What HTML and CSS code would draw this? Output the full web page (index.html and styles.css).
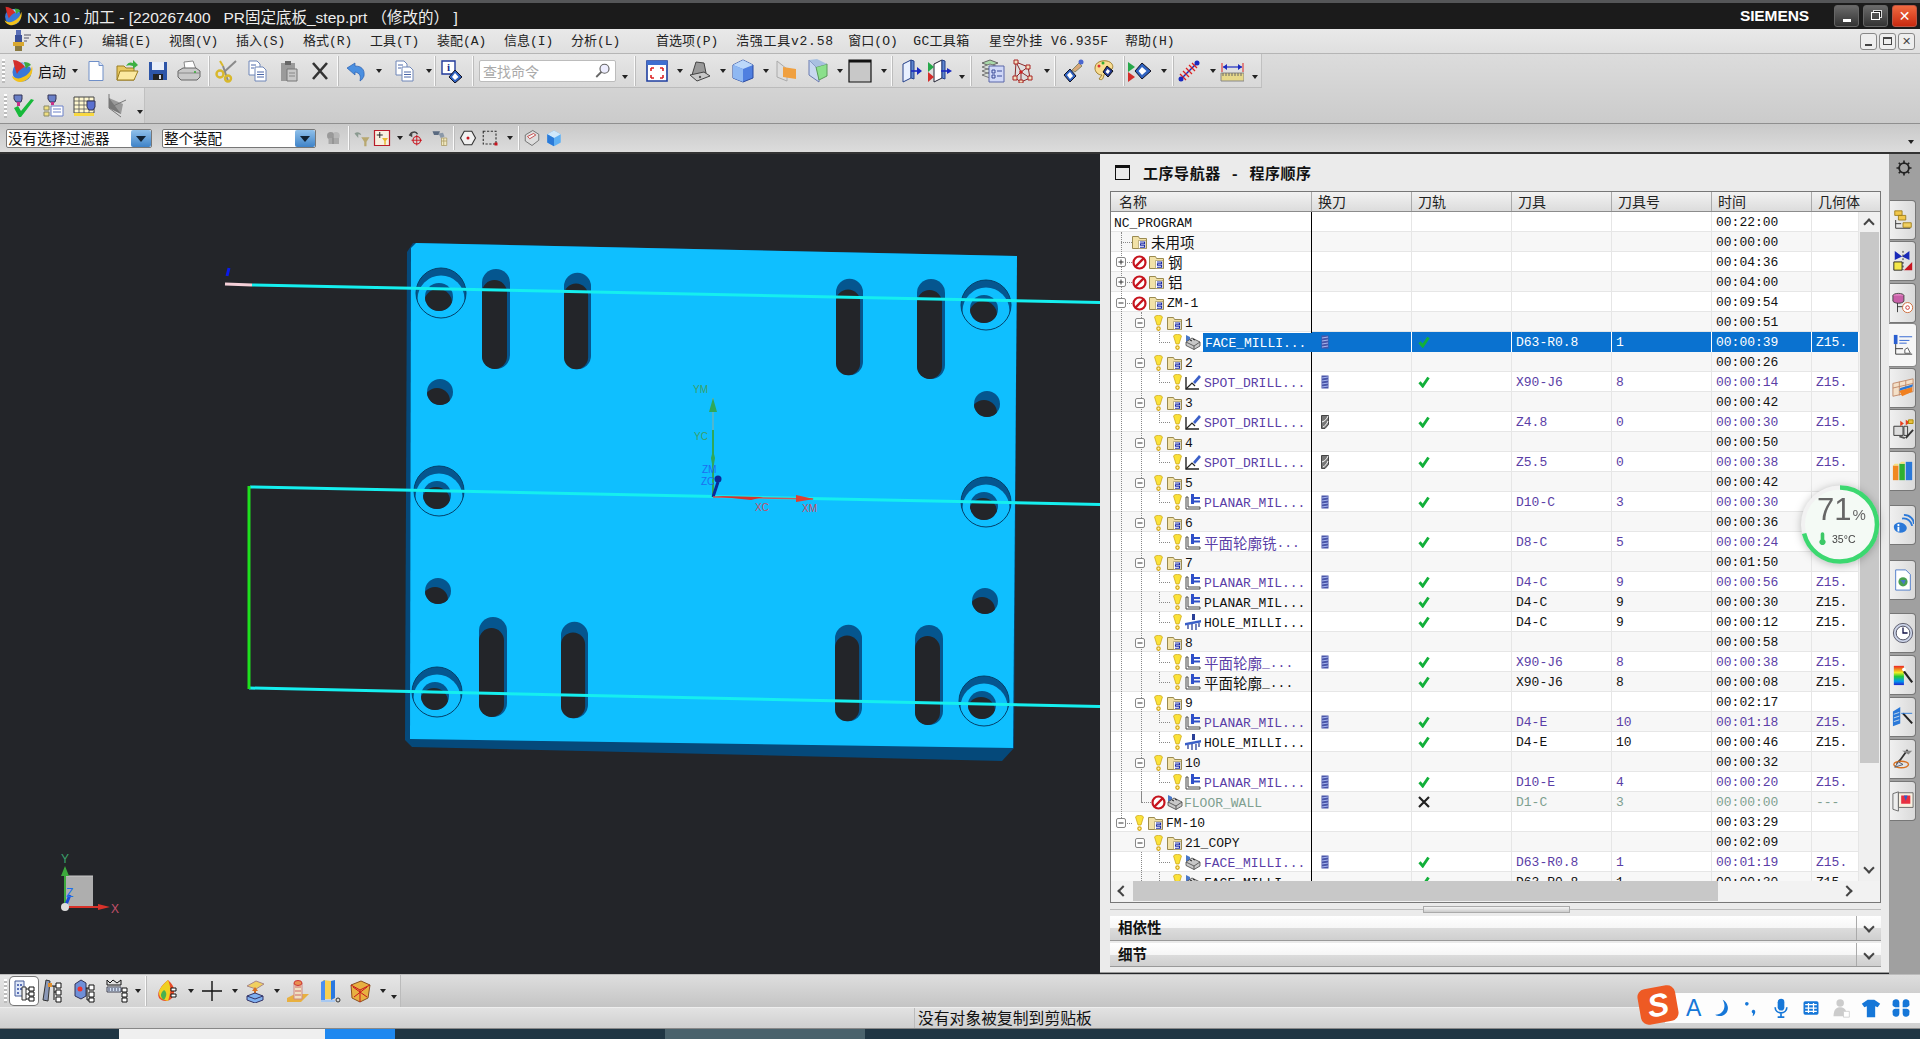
FILE: index.html
```html
<!DOCTYPE html>
<html lang="zh">
<head>
<meta charset="utf-8">
<title>NX 10 - 加工</title>
<link rel="stylesheet" href="styles.css">
</head>
<body>
<svg class="defs" aria-hidden="true">
<defs>
<clipPath id="c13"><circle r="13"/></clipPath>
<clipPath id="c14"><circle cx="-2" cy="4" r="14"/></clipPath>
<symbol id="nx" viewBox="0 0 24 24"><circle cx="12" cy="13" r="9.5" fill="#3a78d8"/><path d="M8 6c5-3 11-2 12 2-3-1-8 0-12 3z" fill="#9fd0f5"/><path d="M3 1c5 0 9 3 12 7-3 1-6 3-8 7C5 10 4 6 3 1z" fill="#d42d2a"/><path d="M22 7c2 7-3 15-11 16-4 0-8-2-9-6 4 3 8 3 11 1 5-2 8-6 9-11z" fill="#f3c21b"/><path d="M14 3c3 0 6 1 7 3-2 1-4 2-5 4z" fill="#3ea83e"/></symbol>
<symbol id="mlg" viewBox="0 0 24 24"><path d="M8 1h5v5H8z" fill="#5a6fb8"/><path d="M7 6h7v7H7z" fill="#3a4f98"/><path d="M5 13h11v4H5z" fill="#d8a830"/><path d="M7 17h7v5H7z" fill="#8a7a40"/><path d="M16 6h7M16 9h5M16 12h3" stroke="#556"/></symbol>
<symbol id="new" viewBox="0 0 24 24"><path d="M5 2.500h10l4 4v15H5z" fill="#fff" stroke="#6f8fc8"/><path d="M15 2.500v4h4" fill="#d8e4f8" stroke="#6f8fc8"/></symbol>
<symbol id="open" viewBox="0 0 24 24"><path d="M2 21V7h7l2 2h8v12z" fill="#e8c860" stroke="#9a7d20"/><path d="M2 21l3-9h18l-4 9z" fill="#fbe9a0" stroke="#9a7d20"/><path d="M11 7c2-4 5-4 7-3V1l5 5-5 4V7c-3-1-5-1-7 0z" fill="#3cb043"/></symbol>
<symbol id="save" viewBox="0 0 24 24"><path d="M3 3h18v18H3z" fill="#2d55a8"/><path d="M6 3h12v8H6z" fill="#e8eef8"/><path d="M7 15h10v6H7z" fill="#222"/><path d="M13 16h2v4h-2z" fill="#d0d8e8"/></symbol>
<symbol id="print" viewBox="0 0 24 24"><path d="M7 3l9-1 3 8H8z" fill="#fff" stroke="#888"/><path d="M1 12l5-3h13l4 3v6l-3 3H4l-3-3z" fill="#c8c8c8" stroke="#666"/><path d="M1 14h22" stroke="#888"/><circle cx="18" cy="13" r="1" fill="#3a3"/></symbol>
<symbol id="cut" viewBox="0 0 24 24"><path d="M22 2L9 14M14 22L9 7" stroke="#8a8a8a" stroke-width="2" fill="none"/><circle cx="6" cy="15" r="3.5" fill="none" stroke="#d8b82c" stroke-width="2.4"/><circle cx="14" cy="19.5" r="3" fill="none" stroke="#d8b82c" stroke-width="2.4"/><path d="M9 7l-3-5" stroke="#d8b82c" stroke-width="2"/></symbol>
<symbol id="copy" viewBox="0 0 24 24"><path d="M4 2h8l3 3v11H4z" fill="#fff" stroke="#6f86b8"/><path d="M10 8h8l3 3v11H10z" fill="#fff" stroke="#6f86b8"/><path d="M12 13h7M12 15.500h7M12 18h7M6 6h5M6 9h3" stroke="#4a66a8"/></symbol>
<symbol id="paste" viewBox="0 0 24 24"><path d="M4 4h14v18H4z" fill="#9a9a9a"/><path d="M8 2h6v4H8z" fill="#666"/><path d="M10 10h10v12H10z" fill="#c8c8c8" stroke="#777"/><path d="M12 14h6M12 17h6" stroke="#888"/></symbol>
<symbol id="del" viewBox="0 0 24 24"><path d="M5 4l14 16M19 4L5 20" stroke="#333" stroke-width="2.6"/></symbol>
<symbol id="undo" viewBox="0 0 24 24"><path d="M3 9l8-5v3c6 0 10 3 9 10-1 2-2 4-4 5 1-5 0-8-5-9v3z" fill="#4a8fe0" stroke="#2a5fb0" stroke-width=".7"/></symbol>
<symbol id="info" viewBox="0 0 24 24"><path d="M3 2h13v13H3z" fill="#fff" stroke="#223a9a" stroke-width="1.4"/><text x="9.500" y="12" font-size="11" font-weight="700" text-anchor="middle" fill="#112a8a" font-family="Liberation Serif">i</text><path d="M16 11l7 7-7 6-6-6z" fill="#2f62c0" stroke="#112"/><path d="M16 14l3.500 4-3.500 3-3-3z" fill="#fff"/></symbol>
<symbol id="mag" viewBox="0 0 24 24"><circle cx="14" cy="9" r="6" fill="#eef" stroke="#666" stroke-width="1.6"/><path d="M10 13l-7 7" stroke="#666" stroke-width="2.4"/></symbol>
<symbol id="fit" viewBox="0 0 24 24"><path d="M2 2h20v20H2z" fill="#fff" stroke="#1f3fa0" stroke-width="1.6"/><path d="M2 2h20v4H2z" fill="#3f6fd0"/><path d="M6 9h3M6 9v3M18 9h-3M18 9v3M6 19h3M6 19v-3M18 19h-3M18 19v-3" stroke="#d22" stroke-width="1.6"/></symbol>
<symbol id="mouse" viewBox="0 0 24 24"><path d="M8 3l8 1 2 10-14 2z" fill="#999" stroke="#444"/><path d="M2 16l14-3 6 4-13 5z" fill="#c8c8c8" stroke="#444"/><circle cx="12" cy="18" r="1.200" fill="#555"/></symbol>
<symbol id="cube" viewBox="0 0 24 24"><path d="M12 1l10 5v13l-10 4-10-4V6z" fill="#4f7fe0" stroke="#2a4aa0"/><path d="M12 1l10 5-10 4L2 6z" fill="#bcd8fa"/><path d="M2 6l10 4v13L2 19z" fill="#8fb8f2"/></symbol>
<symbol id="shade" viewBox="0 0 24 24"><path d="M3 2l10 8v12L3 18z" fill="#ddd" stroke="#aaa"/><path d="M9 8l13 2v10l-13-2z" fill="#f0a040"/></symbol>
<symbol id="glass" viewBox="0 0 24 24"><path d="M3 1l10 10v12L3 16z" fill="#c8d8f0" stroke="#6a7ab0"/><path d="M10 8l11-3v12l-8 4z" fill="#8be08b" stroke="#5a9a5a"/><path d="M3 1l8-1 10 5-11 3z" fill="#a8c0e0"/></symbol>
<symbol id="square" viewBox="0 0 24 24"><path d="M1 1h22v22H1z" fill="#c8c8c8" stroke="#111" stroke-width="1.200"/><path d="M1 1h22v2.500H1z" fill="#111"/></symbol>
<symbol id="oper" viewBox="0 0 24 24"><path d="M4 5l8-4v18l-8 4z" fill="#e8f0ff" stroke="#24408a"/><path d="M12 1l3 1v18l-3-1z" fill="#5f86d0" stroke="#24408a"/><path d="M12 12h9" stroke="#1a2ac0" stroke-width="1.600"/><path d="M18 8l5 4-5 4z" fill="#1a2ac0"/></symbol>
<symbol id="oper2" viewBox="0 0 24 24"><path d="M6 5l8-4v18l-8 4z" fill="#fff" stroke="#223"/><path d="M14 1l3 1v18l-3-1z" fill="#5f86d0" stroke="#24408a"/><path d="M0 3l6 5-6 5z" fill="#27a84a"/><path d="M0 13l6 5-6 5z" fill="#d42d2a"/><path d="M13 12h8" stroke="#1a2ac0" stroke-width="1.600"/><path d="M19 9l5 3-5 3z" fill="#1a2ac0"/></symbol>
<symbol id="stack" viewBox="0 0 24 24"><path d="M1 4l8-3 8 3-8 3z" fill="#a8d8a8" stroke="#666"/><path d="M1 8l8-3 8 3-8 3zM1 12l8-3 8 3-8 3zM1 16l8-3 8 3-8 3z" fill="#d8dfd8" stroke="#777"/><path d="M8 7h15v16H8z" fill="#d0d8f8" stroke="#5a66a8"/><path d="M11 11h3v3h-3zM11 16h3v3h-3zM16 12h5M16 17h5" stroke="#3a4a98" fill="none"/></symbol>
<symbol id="mesh" viewBox="0 0 24 24"><path d="M5 3l12 5 2 11-9 4-6-4zM5 3l5 10 9 6M10 13l-6 6M10 13l7-5M10 13v10" fill="none" stroke="#8a2a2a"/><path d="M3 1h4v4H3zM15 6h4v4h-4zM17 17h4v4h-4zM8 21h4v3H8zM2 17h4v4H2z" fill="#f0e0c0" stroke="#a22"/><circle cx="10" cy="13" r="1.800" fill="#c22"/></symbol>
<symbol id="brush" viewBox="0 0 24 24"><path d="M3 16l6-6 6 7-6 6z" fill="#2f62c0" stroke="#112"/><path d="M6 16l3-3 3 4-3 3z" fill="#fff"/><path d="M11 11l7-7 3 3-7 6z" fill="#d8a878" stroke="#886"/><circle cx="20" cy="3" r="2.500" fill="#4a66d0"/></symbol>
<symbol id="palette" viewBox="0 0 24 24"><path d="M3 9c0-6 7-8 12-7s7 5 5 8c-3 3-7 2-8 6-1 3-1 6-5 4l3-4c-4 0-7-3-7-7z" fill="#f8dc90" stroke="#a08030"/><circle cx="7" cy="7" r="1.500" fill="#d33"/><circle cx="11" cy="4" r="1.500" fill="#3a3"/><path d="M15 7l6 5-5 6-5-5z" fill="#233a90" stroke="#111"/><path d="M15.500 10l2.500 2-2 3-2.500-2z" fill="#fff"/></symbol>
<symbol id="plot" viewBox="0 0 24 24"><path d="M0 3l7 5-7 5z" fill="#27a84a"/><path d="M0 13l7 5-7 5z" fill="#d42d2a"/><path d="M14 4l9 8-9 8-7-8z" fill="#2f62c0" stroke="#112"/><path d="M14 8l4.500 4-4.500 4-3.500-4z" fill="#fff"/></symbol>
<symbol id="cross" viewBox="0 0 24 24"><path d="M3 21L21 3" stroke="#1a2ac0" stroke-width="1.400"/><path d="M3 15l6 6M6 12l6 6M9 9l6 6M12 6l6 6M15 4l5 5" stroke="#d22" stroke-width="1.300"/><circle cx="4" cy="20" r="2.500" fill="#1a2ac0"/><circle cx="20" cy="4" r="2.500" fill="#1a2ac0"/></symbol>
<symbol id="ruler" viewBox="0 0 24 24"><path d="M1 14h23v8H1z" fill="#e6d88a" stroke="#888"/><path d="M3 14v3M6 14v3M9 14v3M12 14v3M15 14v3M18 14v3M21 14v3" stroke="#666"/><path d="M2 4v9M23 4v9" stroke="#d22"/><path d="M3 8h19" stroke="#1a2ac0" stroke-width="1.200"/><path d="M3 8l4-3v6zM22 8l-4-3v6z" fill="#1a2ac0"/></symbol>
<symbol id="vcheck" viewBox="0 0 24 24"><path d="M3 1h8v4l-1 3H5L3 5z" fill="#6a80c8" stroke="#335"/><path d="M6 8h3v4H6z" fill="#c8308a"/><path d="M3 14l5 9h2L23 6l-3-1-10 12-3-5z" fill="#17b93a"/></symbol>
<symbol id="vtree" viewBox="0 0 24 24"><path d="M7 1h8v4l-1 3H9L7 5z" fill="#6a80c8" stroke="#335"/><path d="M10 8h3v3h-3z" fill="#c8308a"/><path d="M3 12h5v4H3zM3 18h5v4H3z" fill="#f0df80" stroke="#886"/><path d="M10 12h12v10H10z" fill="#fff" stroke="#6a80c8"/><path d="M12 15h8M12 18h8" stroke="#6a80c8"/></symbol>
<symbol id="vgrid" viewBox="0 0 24 24"><path d="M1 3h20v16H1z" fill="#fff8d0" stroke="#444"/><path d="M1 7h20M1 11h20M1 15h20M6 3v16M11 3v16M16 3v16" stroke="#555" stroke-width=".8"/><path d="M1 19h20v3H1z" fill="#f8d840"/><path d="M14 7h8v6l-2 3h-4l-2-3z" fill="#5a70d0" stroke="#335"/></symbol>
<symbol id="vaxis" viewBox="0 0 24 24"><path d="M6 4l14 6-2 10-12-6z" fill="#999"/><path d="M6 14L6 0M6 14L23 6M6 14l12 9" stroke="#777"/><path d="M6 4v10l12 6" fill="#777"/></symbol>
<symbol id="filter" viewBox="0 0 24 24"><circle cx="9" cy="9" r="5" fill="#9a9a9a"/><circle cx="16" cy="9" r="5" fill="#b8b8b8"/><path d="M6 12h14v8H6z" fill="#a8a8a8"/><path d="M12 6v14" stroke="#777"/></symbol>
<symbol id="funnel1" viewBox="0 0 24 24"><path d="M2 6c3-3 8-2 9 2l-4-1 0 5z" fill="#8a9a90"/><path d="M11 11h11l-4 6v6h-3v-6z" fill="#b8a870"/></symbol>
<symbol id="funnel2" viewBox="0 0 24 24"><path d="M2 2h20v20H2z" fill="#f8f0e0" stroke="#b81c2a" stroke-width="1.600"/><path d="M9 4v8M5 8h8" stroke="#222" stroke-width="1.300"/><path d="M12 12h8l-3 4v5h-2v-5z" fill="#e8b830"/></symbol>
<symbol id="rot" viewBox="0 0 24 24"><path d="M4 9c0-5 8-7 10-2" fill="none" stroke="#444" stroke-width="2"/><path d="M2 8l5-2v5z" fill="#444"/><circle cx="13" cy="15" r="5" fill="none" stroke="#c8141e" stroke-width="1.500"/><path d="M13 8v14M6 15h14" stroke="#c8141e" stroke-width="1.200"/></symbol>
<symbol id="casc" viewBox="0 0 24 24"><path d="M2 3h10l-2 5H4z" fill="#5a6a80"/><path d="M10 6l6-1 2 5-5 2z" fill="#8a98a8"/><path d="M14 12h7v10h-7z" fill="#f0e8c0" stroke="#a89860"/><path d="M14 16h7M17 12v10" stroke="#a89860"/></symbol>
<symbol id="hex" viewBox="0 0 24 24"><path d="M7 3h10l5 9-5 9H7l-5-9z" fill="#f0f0f0" stroke="#333" stroke-width="1.500"/><circle cx="12" cy="12" r="2" fill="#c8141e"/></symbol>
<symbol id="dash" viewBox="0 0 24 24"><path d="M3 3h17v17H3z" fill="none" stroke="#333" stroke-width="1.500" stroke-dasharray="3 2"/><path d="M18 18h4v4h-4z" fill="#c8141e"/></symbol>
<symbol id="ecube" viewBox="0 0 24 24"><path d="M3 8l10-6 8 5v8l-9 7-9-6z" fill="#ddd" stroke="#555"/><path d="M6 10l8-4 3 2-8 5z" fill="#f4f4f4" stroke="#b22"/></symbol>
<symbol id="bcube" viewBox="0 0 24 24"><path d="M12 2l9 5v11l-9 5-9-5V7z" fill="#5eb0f4"/><path d="M12 2l9 5-9 5-9-5z" fill="#cfe8fb"/><path d="M3 7l9 5v11l-9-5z" fill="#2a7ad8"/></symbol>
<symbol id="b1" viewBox="0 0 24 24"><path d="M3 2h9v15H3z" fill="#dfe8f8" stroke="#445a98"/><path d="M5 5h2v2H5zM8 5h2v2H8zM5 9h2v2H5zM8 9h2v2H8zM5 13h2v2H5z" fill="#5a70b8"/><path d="M10 8h4v13h-4z" fill="#eee" stroke="#333"/><path d="M17 8h5v4h-5zM17 13h5v4h-5zM17 18h5v4h-5z" fill="#fff" stroke="#111"/><path d="M14 10h3M14 15h3M14 20h3" stroke="#111"/></symbol>
<symbol id="b2" viewBox="0 0 24 24"><path d="M5 1l4 1-2 20-5-1z" fill="#8a98b8" stroke="#333"/><path d="M7 4h4v4H7z" fill="#e09030"/><path d="M15 4h5v5h-5zM15 11h5v5h-5zM15 18h5v5h-5z" fill="#fff" stroke="#111"/><path d="M11 7h4M13 7v14M13 13h2" stroke="#111"/></symbol>
<symbol id="b3" viewBox="0 0 24 24"><path d="M2 5l6-4 5 3v13l-5 3-6-3z" fill="#6f8fd8" stroke="#335"/><circle cx="7" cy="10" r="2.500" fill="#e33"/><path d="M16 6h5v5h-5zM16 13h5v5h-5zM16 19h5v4h-5z" fill="#fff" stroke="#111"/><path d="M13 9h3M14 9v12h2" fill="none" stroke="#111"/></symbol>
<symbol id="b4" viewBox="0 0 24 24"><path d="M1 1l3 3 3-3 4 3 4-3v5H1z" fill="none" stroke="#111"/><path d="M1 8h14v5H1z" fill="#d0e0f0" stroke="#445"/><path d="M3 9v3M6 9v3M9 9v3M12 9v3" stroke="#446"/><path d="M16 9h5v4h-5zM16 14h5v4h-5zM16 19h5v4h-5z" fill="#fff" stroke="#111"/></symbol>
<symbol id="b5" viewBox="0 0 24 24"><path d="M12 1c6 5 8 11 4 18-3 4-10 4-13 0C0 13 6 6 12 1z" fill="#e84c2a"/><path d="M12 1c3 7 3 12 0 21-5-1-9-3-9-8 0-5 5-9 9-13z" fill="#f0d020"/><path d="M8 11c3 2 3 6 0 10-3-2-5-6 0-10z" fill="#48b050"/><path d="M15 9h5v3h-5zM15 15h5v3h-5z" fill="#fff" stroke="#111"/></symbol>
<symbol id="b6" viewBox="0 0 24 24"><path d="M12 2v20M2 12h20" stroke="#111" stroke-width="1.400"/></symbol>
<symbol id="b7" viewBox="0 0 24 24"><path d="M4 7l9-5 8 3-8 5z" fill="#f0d060" stroke="#a88"/><path d="M12 9v7" stroke="#d87020" stroke-width="2"/><path d="M9 12l3-4 3 4z" fill="#d87020"/><path d="M4 17l8-3 8 3v4l-8 3-8-3z" fill="#7fb0f0" stroke="#336"/><path d="M4 17l8 3 8-3" fill="none" stroke="#336"/></symbol>
<symbol id="b8" viewBox="0 0 24 24"><path d="M1 19l8-4h14l-8 8H1z" fill="#e8b040"/><path d="M8 4h8v16H8z" fill="#f0e0c0" stroke="#c88"/><ellipse cx="12" cy="4" rx="4" ry="2.500" fill="#e89050" stroke="#c33"/><path d="M9 8h6M9 12h6M9 16h6" stroke="#c66"/></symbol>
<symbol id="b9" viewBox="0 0 24 24"><path d="M6 1l8 1v18H6z" fill="#f8d050"/><path d="M14 2l4-1v18l-4 2z" fill="#2a78e0"/><path d="M4 3l4-2v20l-4 1z" fill="#4a8ff0"/><path d="M4 21h14v2H4z" fill="#a8c8f0"/><circle cx="21" cy="21" r="2" fill="none" stroke="#333"/></symbol>
<symbol id="b10" viewBox="0 0 24 24"><path d="M3 6l10-4 9 4-2 13-8 4-8-4z" fill="#e8b040" stroke="#8a5020"/><path d="M3 6l9 5 10-5M12 11v12M5 8l14 10M19 8L6 18" fill="none" stroke="#c8141e"/></symbol>
<symbol id="folder" viewBox="0 0 15 15"><path d="M.5 13.500V1.500h6l1 2h7v10z" fill="#f2e2a8" stroke="#9a8a50"/><path d="M6.500 5.500h7.500v8H6.500z" fill="#fff" stroke="#9a8a50" stroke-width=".6"/><path d="M8 7h4.500v1.800H8.500v1.400h4v2H8" fill="none" stroke="#1f2ea8" stroke-width="1.100"/></symbol>
<symbol id="bulb" viewBox="0 0 9 16"><path d="M.6 2.200C.6-.2 8.400-.2 8.400 2.200L6 10H3z" fill="#fbe23a" stroke="#c8a010" stroke-width=".7"/><circle cx="4.500" cy="13.600" r="1.700" fill="#fff4b0" stroke="#d8a810" stroke-width="1.200"/></symbol>
<symbol id="no" viewBox="0 0 15 15"><circle cx="7.500" cy="7.500" r="6" fill="#fff" stroke="#c6141e" stroke-width="2.200"/><path d="M3.400 11.600l8.200-8.200" stroke="#c6141e" stroke-width="2.200"/></symbol>
<symbol id="mn" viewBox="0 0 10 10"><rect x=".5" y=".5" width="9" height="9" rx="1.500" fill="#fff" stroke="#888"/><path d="M2.500 5h5" stroke="#333"/></symbol>
<symbol id="pl" viewBox="0 0 10 10"><rect x=".5" y=".5" width="9" height="9" rx="1.500" fill="#fff" stroke="#888"/><path d="M2.500 5h5M5 2.500v5" stroke="#333"/></symbol>
<symbol id="face" viewBox="0 0 16 16"><path d="M1 1l4 2v6L1 7z" fill="#4a78c8"/><path d="M1 8l6-4 8 4v4l-6 3.500-8-4z" fill="#c8c8c8" stroke="#444" stroke-width=".8"/><path d="M1 8l8 4 6-4M9 12v3.500" fill="none" stroke="#444" stroke-width=".8"/><path d="M5 6l2 1M8 5l2 1" stroke="#222"/></symbol>
<symbol id="spot" viewBox="0 0 16 16"><path d="M1 3v12h13" fill="none" stroke="#222" stroke-width="1.400"/><path d="M1 15l6-6 3 3" fill="none" stroke="#222" stroke-width="1.200"/><path d="M8 8l6-7 2 2-6 7z" fill="#3a5fc8"/></symbol>
<symbol id="planar" viewBox="0 0 16 16"><path d="M1 3v12h14v-2H3V3z" fill="#fff" stroke="#444" stroke-width="1"/><path d="M6 0h3v3h6v2H9v1.500h6v2H9V10H6z" fill="#3050c8"/></symbol>
<symbol id="hole" viewBox="0 0 16 16"><path d="M7 0h3v6H7z" fill="#2a3f98"/><path d="M0 9l16-3v2.500L0 11.500z" fill="#3a5fc8"/><path d="M3 11v4M7 10v6M11 10v6M14 9v4" stroke="#2a3f98" stroke-width="1.300"/></symbol>
<symbol id="tb" viewBox="0 0 8 14"><rect x=".5" y=".5" width="7" height="13" fill="#4a55a8"/><path d="M1 3l6-1M1 6l6-1M1 9l6-1M1 12l6-1" stroke="#a8b8f0"/></symbol>
<symbol id="tg" viewBox="0 0 8 14"><path d="M.5.500h7v9l-3.500 4h-3.500z" fill="#777" stroke="#444"/><path d="M1 7C4 6 6 4 7 1M2 12c2-1 4-3 5-6" stroke="#fff" fill="none"/></symbol>
<symbol id="ok" viewBox="0 0 12 12"><path d="M1.500 6.300L4.700 10 10.500 1.500" fill="none" stroke="#12b03a" stroke-width="2.900"/></symbol>
<symbol id="bad" viewBox="0 0 12 12"><path d="M1 1l10 10M11 1L1 11" stroke="#222" stroke-width="2.200"/></symbol>
<symbol id="t1" viewBox="0 0 24 24"><path d="M3 2h8v5H3zM7 7h8v5H7z" fill="#f2c84a" stroke="#a08020"/><path d="M4 12v9h16M4 16h6" stroke="#333" fill="none"/><path d="M12 15h9v5h-9z" fill="#f2d060" stroke="#a08020"/></symbol>
<symbol id="t2" viewBox="0 0 24 24"><path d="M3 1l8 6 8-6v10l-8-4-8 4z" fill="#1a2ab8"/><path d="M2 13h9v9H2z" fill="#f4e84a" stroke="#222"/><path d="M13 22l9-9v9z" fill="#c81420"/><path d="M12 1v21" stroke="#222" stroke-dasharray="2 2"/></symbol>
<symbol id="t3" viewBox="0 0 24 24"><ellipse cx="7" cy="4" rx="6" ry="2.500" fill="#e080c0" stroke="#444"/><path d="M1 4v6c2 3 10 3 12 0V4" fill="#c860a8" stroke="#444"/><path d="M6 12v10M6 16h6" stroke="#333"/><circle cx="17" cy="17" r="5.500" fill="#fff" stroke="#c63"/><circle cx="17" cy="17" r="2" fill="none" stroke="#c33"/></symbol>
<symbol id="t4" viewBox="0 0 24 24"><path d="M2 1h4v10H2z" fill="#2a5fd0"/><path d="M8 3h14M8 7h11M8 10h8" stroke="#2a5fd0"/><path d="M4 11v11h18M4 16h8" stroke="#333" fill="none"/><path d="M14 21v-4l3-2 3 6z" fill="#fff" stroke="#555"/></symbol>
<symbol id="t5" viewBox="0 0 24 24"><path d="M1 7l22-5v14L1 21z" fill="#f4e0c8" stroke="#c08868"/><path d="M1 12l22-5M8 5v15M15 4v14" stroke="#c08868"/><path d="M8 15l14-4v5L11 21z" fill="#f08020"/><path d="M8 15l14-4 1-3-14 4z" fill="#2a78d8"/></symbol>
<symbol id="t6" viewBox="0 0 24 24"><path d="M2 9h10v10H2z" fill="#ddd" stroke="#333"/><path d="M13 9h4v10h-4z" fill="#ddd" stroke="#333"/><path d="M9 3l4 3-4 3zM15 2l5 3-5 3z" fill="#e84020"/><path d="M18 2h5v4h-5z" fill="#e8c040" stroke="#a80"/><path d="M15 22l8-9" stroke="#333" stroke-width="2"/><path d="M14 22l-6-2" stroke="#555" stroke-width="2"/></symbol>
<symbol id="t7" viewBox="0 0 24 24"><path d="M1 6h6v16H1z" fill="#f08820"/><path d="M8 4h6v18H8z" fill="#30b030"/><path d="M15 2h7v20h-7z" fill="#2a78d8"/><path d="M1 6l2-2h4v2zM8 4l2-2h4v2z" fill="#f8e080"/></symbol>
<symbol id="t8" viewBox="0 0 24 24"><path d="M2 14c0-4 6-6 10-4s6 6 2 9c-5 3-12 1-12-5z" fill="#2a78d8"/><path d="M7 11v2M7 14v5" stroke="#fff" stroke-width="2"/><path d="M11 5c6-1 10 3 11 8M13 1c7 0 11 5 11 10" fill="none" stroke="#2a78d8" stroke-width="2"/></symbol>
<symbol id="t9" viewBox="0 0 24 24"><path d="M4 1h11l5 5v17H4z" fill="#fff" stroke="#4a78c8"/><circle cx="12" cy="14" r="5" fill="#4aa050"/><path d="M9 12h6l-2 5" fill="#4a78c8"/></symbol>
<symbol id="t10" viewBox="0 0 24 24"><circle cx="12" cy="12" r="10.500" fill="#ccd4e8" stroke="#556"/><circle cx="12" cy="12" r="7.500" fill="#fff" stroke="#445"/><path d="M12 6v6h5" stroke="#114" stroke-width="1.400" fill="none"/></symbol>
<symbol id="t11" viewBox="0 0 24 24"><defs><linearGradient id="rb" x1="0" y1="0" x2="0" y2="1"><stop offset="0" stop-color="#e22"/><stop offset=".35" stop-color="#ee2"/><stop offset=".55" stop-color="#2c3"/><stop offset=".8" stop-color="#09e"/><stop offset="1" stop-color="#22c"/></linearGradient></defs><path d="M2 2h11v21H2z" fill="url(#rb)"/><path d="M13 8l9 12" stroke="#222" stroke-width="2.400"/><circle cx="13" cy="6" r="2" fill="#fff"/></symbol>
<symbol id="t12" viewBox="0 0 24 24"><path d="M1 6l8-5v18l-8 3z" fill="#2a78d8"/><path d="M2 9l6-2M2 13l6-2M2 17l6-2" stroke="#cde"/><path d="M12 8l10 11" stroke="#222" stroke-width="2.200"/><path d="M10 8h12" stroke="#2a78d8"/></symbol>
<symbol id="t13" viewBox="0 0 24 24"><path d="M17 2l-8 11-4 4" stroke="#333" stroke-width="2" fill="none"/><path d="M11 3h11l-4 4z" fill="#888"/><ellipse cx="10" cy="18" rx="8" ry="3.500" fill="none" stroke="#d87020" stroke-width="1.500"/><path d="M3 21l9-3-5-3z" fill="#d0d8f0" stroke="#555"/></symbol>
<symbol id="t14" viewBox="0 0 24 24"><path d="M1 4l6-2v21l-6-2z" fill="#eee" stroke="#666"/><path d="M7 3h16v16H7z" fill="#f8f0e0" stroke="#666"/><path d="M10 6h10v9H10z" fill="#e83040"/><path d="M13 6h4l-2 6z" fill="#2a5fd0"/></symbol>
<symbol id="hole-cb" viewBox="-26 -26 52 52"><circle r="25" fill="#05568f"/><circle cy="6" r="23.500" fill="#0fbfff"/><circle r="25" fill="none" stroke="#04406a"/><circle cx="-2" cy="4" r="14" fill="#05568f"/><g clip-path="url(#c14)"><circle cx="-3" cy="10" r="14" fill="#232529"/></g></symbol>
<symbol id="hole-s" viewBox="-14 -14 28 28"><circle r="13" fill="#05568f"/><g clip-path="url(#c13)"><circle cx="-3" cy="9" r="13" fill="#232529"/></g></symbol>
<symbol id="slot" viewBox="0 0 28 100"><rect width="28" height="100" rx="14" fill="#05568f"/><rect y="11" width="25" height="89" rx="12.500" fill="#232529"/></symbol>
</defs>
</svg>

<div class="app">
  <header class="titlebar">
    <svg class="tlogo"><use href="#nx"/></svg>
    <span class="ttext">NX 10 - 加工 - [220267400   PR固定底板_step.prt （修改的） ]</span>
    <span class="siemens">SIEMENS</span>
    <span class="wbtn"><i class="wmin"></i></span>
    <span class="wbtn"><i class="wres"></i></span>
    <span class="wbtn wclose">✕</span>
  </header>

  <nav class="menubar">
    <svg class="ic mlogo"><use href="#mlg"/></svg>
    <span class="mi">文件(F)</span><span class="mi">编辑(E)</span><span class="mi">视图(V)</span><span class="mi">插入(S)</span><span class="mi">格式(R)</span><span class="mi">工具(T)</span><span class="mi">装配(A)</span><span class="mi">信息(I)</span><span class="mi">分析(L)</span>
    <span class="mi m-pref">首选项(P)</span><span class="mi m-a">浩强工具v2.58</span><span class="mi m-b">窗口(O)</span><span class="mi m-c">GC工具箱</span><span class="mi m-d">星空外挂 V6.935F</span><span class="mi m-e">帮助(H)</span>
    <span class="mdi"><b class="dmin"></b></span><span class="mdi"><b class="dres"></b></span><span class="mdi">✕</span>
  </nav>

  <section class="toolbars">
    <div class="tbrow tb1">
      <i class="grip"></i>
      <svg class="ic m5"><use href="#nx"/></svg><span class="qd m4">启动</span><i class="ar m6"></i>
      <svg class="ic m7"><use href="#new"/></svg><svg class="ic m7"><use href="#open"/></svg><svg class="ic m7"><use href="#save"/></svg><svg class="ic m7"><use href="#print"/></svg><i class="sep m7"></i>
      <svg class="ic m5"><use href="#cut"/></svg><svg class="ic m7"><use href="#copy"/></svg><svg class="ic m8"><use href="#paste"/></svg><svg class="ic m7"><use href="#del"/></svg><i class="sep m5"></i>
      <svg class="ic m6"><use href="#undo"/></svg><i class="ar m8"></i><svg class="ic m11"><use href="#copy"/></svg><i class="ar m10"></i><i class="sep m3"></i>
      <svg class="ic m4"><use href="#info"/></svg><i class="sep m9"></i>
      <div class="search m6"><span>查找命令</span><svg class="mag"><use href="#mag"/></svg></div><i class="ar lo m6"></i><i class="sep m7"></i>
      <svg class="ic m10"><use href="#fit"/></svg><i class="ar m8"></i><svg class="ic m6"><use href="#mouse"/></svg><i class="ar m8"></i><svg class="ic m6"><use href="#cube"/></svg><i class="ar m8"></i><svg class="ic m6"><use href="#shade"/></svg><svg class="ic m8"><use href="#glass"/></svg><i class="ar m7"></i><svg class="ic m6"><use href="#square"/></svg><i class="ar m9"></i><i class="sep m5"></i>
      <svg class="ic m7"><use href="#oper"/></svg><svg class="ic m5"><use href="#oper2"/></svg><i class="ar lo m7"></i><i class="sep m6"></i>
      <svg class="ic m10"><use href="#stack"/></svg><svg class="ic m6"><use href="#mesh"/></svg><i class="ar m9"></i><i class="sep m5"></i>
      <svg class="ic m6"><use href="#brush"/></svg><svg class="ic m7"><use href="#palette"/></svg><i class="sep m7"></i>
      <svg class="ic m4"><use href="#plot"/></svg><i class="ar m9"></i><i class="sep m6"></i>
      <svg class="ic m4"><use href="#cross"/></svg><i class="ar m9"></i><svg class="ic m5"><use href="#ruler"/></svg><i class="ar lo m8"></i>
    </div>
    <div class="tbrow tb2">
      <i class="grip"></i>
      <svg class="ic m4"><use href="#vcheck"/></svg><svg class="ic m6"><use href="#vtree"/></svg><svg class="ic m8"><use href="#vgrid"/></svg><svg class="ic m6"><use href="#vaxis"/></svg><i class="ar lo m10"></i>
    </div>
  </section>

  <section class="selbar">
    <div class="combo c1"><span>没有选择过滤器</span><b class="drop"></b></div>
    <div class="combo c2"><span>整个装配</span><b class="drop"></b></div>
    <svg class="is m8"><use href="#filter"/></svg><i class="sep m6"></i>
    <svg class="is m4"><use href="#funnel1"/></svg><svg class="is m2"><use href="#funnel2"/></svg><i class="ar m6"></i>
    <svg class="is m5"><use href="#rot"/></svg><svg class="is m6"><use href="#casc"/></svg><i class="sep m4"></i>
    <svg class="is m5"><use href="#hex"/></svg><svg class="is m4"><use href="#dash"/></svg><i class="ar m8"></i><i class="sep m6"></i>
    <svg class="is m4"><use href="#ecube"/></svg><svg class="is m4"><use href="#bcube"/></svg>
    <i class="ar end"></i>
  </section>

  <main class="main">
    <svg class="viewport" viewBox="0 154 1100 820">
      <path d="M413 243L1017 256 1014 748 1002 761 412 747 405 740 407 252z" fill="#05497a"/>
      <path d="M416 243L1017 256 1013 748 410 739 411 248z" fill="#0fbfff"/>
      <use href="#slot" x="482" y="269" width="28" height="100"/>
      <use href="#slot" x="564" y="271" width="27" height="100"/>
      <use href="#slot" x="836" y="277" width="27" height="100"/>
      <use href="#slot" x="917" y="279" width="28" height="100"/>
      <use href="#slot" x="479" y="617" width="28" height="100"/>
      <use href="#slot" x="561" y="620" width="27" height="100"/>
      <use href="#slot" x="835" y="623" width="27" height="100"/>
      <use href="#slot" x="915" y="625" width="28" height="100"/>
      <use href="#hole-cb" x="415" y="267" width="52" height="52"/>
      <use href="#hole-cb" x="413" y="465" width="52" height="52"/>
      <use href="#hole-cb" x="411" y="666" width="52" height="52"/>
      <use href="#hole-cb" x="960" y="279" width="52" height="52"/>
      <use href="#hole-cb" x="960" y="476" width="52" height="52"/>
      <use href="#hole-cb" x="958" y="675" width="52" height="52"/>
      <use href="#hole-s" x="426" y="378" width="28" height="28"/>
      <use href="#hole-s" x="424" y="577" width="28" height="28"/>
      <use href="#hole-s" x="973" y="390" width="28" height="28"/>
      <use href="#hole-s" x="971" y="587" width="28" height="28"/>
      <path d="M252 285L1100 302.500M250 487L1100 504.500M249 688L1100 706.500" stroke="#15efef" stroke-width="3" fill="none"/>
      <path d="M249 486V689" stroke="#1ee01e" stroke-width="3"/>
      <path d="M225 284L252 285" stroke="#f5d0d8" stroke-width="3"/>
      <path d="M229 268l-2 8" stroke="#0a1ae8" stroke-width="3"/>
      <path d="M713 497V430" stroke="#2fa85a" stroke-width="2"/>
      <path d="M713 470l-2-12 2-8 2 8z" fill="#2fa85a"/>
      <path d="M713 430V398" stroke="#8fb0a0"/><path d="M709 412l4-14 4 14z" fill="#2fa85a"/>
      <text class="ax ag" x="693" y="393">YM</text><text class="ax ag" x="694" y="440">YC</text>
      <text class="ax ab" x="702" y="473">ZM</text><text class="ax ab" x="701" y="485">ZC</text>
      <path d="M713 497l5-15" stroke="#0a2a98" stroke-width="3"/><circle cx="718" cy="479" r="3.500" fill="#0a2a98"/>
      <path d="M713 497L813 499" stroke="#c85a60" stroke-width="1.500"/><path d="M713 496l50 1 -12 3z" fill="#d8322a"/><path d="M796 495l18 4-18 3z" fill="#e04030"/>
      <text class="ax ar-t" x="755" y="511">XC</text><text class="ax ar-t" x="802" y="512">XM</text>
      <path d="M65 876h28v31H65z" fill="#aeaeae"/><path d="M65 876h28" stroke="#c8c8c8"/>
      <path d="M65 905V868" stroke="#3ca83c" stroke-width="2"/><path d="M61 876l4-10 4 10z" fill="#3ca83c"/>
      <path d="M65 907H104" stroke="#d8322a" stroke-width="2"/><path d="M98 904l12 3-12 3z" fill="#d8322a"/>
      <path d="M65 907l5-12" stroke="#1a4ad8" stroke-width="3"/>
      <circle cx="65" cy="907" r="4" fill="#ddd"/>
      <text class="ax2 ag" x="61" y="863">Y</text><text class="ax2 ab" x="66" y="897">Z</text><text class="ax2 ar-t" x="111" y="913">X</text>
    </svg>

    <aside class="panel">
      <div class="ptitle"><i class="pbox"></i><span>工序导航器 - 程序顺序</span></div>
      <div class="table">
        <div class="thead"><span>名称</span><span>换刀</span><span>刀轨</span><span>刀具</span><span>刀具号</span><span>时间</span><span>几何体</span></div>
        <div class="tbody">
          <div class="rows">
            <div class="r"><div class="n l-root"><span>NC_PROGRAM</span></div><div></div><div></div><div></div><div></div><div>00:22:00</div><div></div></div>
            <div class="r"><div class="n l0"><i class="st s15"></i><svg class="fo"><use href="#folder"/></svg><span class="cj t4">未用项</span></div><div></div><div></div><div></div><div></div><div>00:00:00</div><div></div></div>
            <div class="r"><div class="n l0"><svg class="ex"><use href="#pl"/></svg><i class="st s5"></i><svg class="fo"><use href="#no"/></svg><svg class="fo m2"><use href="#folder"/></svg><span class="cj t4">钢</span></div><div></div><div></div><div></div><div></div><div>00:04:36</div><div></div></div>
            <div class="r"><div class="n l0"><svg class="ex"><use href="#pl"/></svg><i class="st s5"></i><svg class="fo"><use href="#no"/></svg><svg class="fo m2"><use href="#folder"/></svg><span class="cj t4">铝</span></div><div></div><div></div><div></div><div></div><div>00:04:00</div><div></div></div>
            <div class="r"><div class="n l0"><svg class="ex"><use href="#mn"/></svg><i class="st s5"></i><svg class="fo"><use href="#no"/></svg><svg class="fo m2"><use href="#folder"/></svg><span class="t3">ZM-1</span></div><div></div><div></div><div></div><div></div><div>00:09:54</div><div></div></div>
            <div class="r"><div class="n l1"><svg class="ex"><use href="#mn"/></svg><svg class="bu m9"><use href="#bulb"/></svg><svg class="fo m4"><use href="#folder"/></svg><span class="t3">1</span></div><div></div><div></div><div></div><div></div><div>00:00:51</div><div></div></div>
            <div class="r sel"><div class="n l2"><i class="st up"></i><svg class="bu"><use href="#bulb"/></svg><svg class="op"><use href="#face"/></svg><span class="name">FACE_MILLI...</span></div><div class="c1c"><svg class="tc"><use href="#tb"/></svg></div><div class="c2c"><svg class="ck"><use href="#ok"/></svg></div><div>D63-R0.8</div><div>1</div><div>00:00:39</div><div>Z15.</div></div>
            <div class="r"><div class="n l1"><svg class="ex"><use href="#mn"/></svg><svg class="bu m9"><use href="#bulb"/></svg><svg class="fo m4"><use href="#folder"/></svg><span class="t3">2</span></div><div></div><div></div><div></div><div></div><div>00:00:26</div><div></div></div>
            <div class="r pu"><div class="n l2"><i class="st up"></i><svg class="bu"><use href="#bulb"/></svg><svg class="op"><use href="#spot"/></svg><span class="name">SPOT_DRILL...</span></div><div class="c1c"><svg class="tc"><use href="#tb"/></svg></div><div class="c2c"><svg class="ck"><use href="#ok"/></svg></div><div>X90-J6</div><div>8</div><div>00:00:14</div><div>Z15.</div></div>
            <div class="r"><div class="n l1"><svg class="ex"><use href="#mn"/></svg><svg class="bu m9"><use href="#bulb"/></svg><svg class="fo m4"><use href="#folder"/></svg><span class="t3">3</span></div><div></div><div></div><div></div><div></div><div>00:00:42</div><div></div></div>
            <div class="r pu"><div class="n l2"><i class="st up"></i><svg class="bu"><use href="#bulb"/></svg><svg class="op"><use href="#spot"/></svg><span class="name">SPOT_DRILL...</span></div><div class="c1c"><svg class="tc"><use href="#tg"/></svg></div><div class="c2c"><svg class="ck"><use href="#ok"/></svg></div><div>Z4.8</div><div>0</div><div>00:00:30</div><div>Z15.</div></div>
            <div class="r"><div class="n l1"><svg class="ex"><use href="#mn"/></svg><svg class="bu m9"><use href="#bulb"/></svg><svg class="fo m4"><use href="#folder"/></svg><span class="t3">4</span></div><div></div><div></div><div></div><div></div><div>00:00:50</div><div></div></div>
            <div class="r pu"><div class="n l2"><i class="st up"></i><svg class="bu"><use href="#bulb"/></svg><svg class="op"><use href="#spot"/></svg><span class="name">SPOT_DRILL...</span></div><div class="c1c"><svg class="tc"><use href="#tg"/></svg></div><div class="c2c"><svg class="ck"><use href="#ok"/></svg></div><div>Z5.5</div><div>0</div><div>00:00:38</div><div>Z15.</div></div>
            <div class="r"><div class="n l1"><svg class="ex"><use href="#mn"/></svg><svg class="bu m9"><use href="#bulb"/></svg><svg class="fo m4"><use href="#folder"/></svg><span class="t3">5</span></div><div></div><div></div><div></div><div></div><div>00:00:42</div><div></div></div>
            <div class="r pu"><div class="n l2"><i class="st up"></i><svg class="bu"><use href="#bulb"/></svg><svg class="op"><use href="#planar"/></svg><span class="name">PLANAR_MIL...</span></div><div class="c1c"><svg class="tc"><use href="#tb"/></svg></div><div class="c2c"><svg class="ck"><use href="#ok"/></svg></div><div>D10-C</div><div>3</div><div>00:00:30</div><div>Z15.</div></div>
            <div class="r"><div class="n l1"><svg class="ex"><use href="#mn"/></svg><svg class="bu m9"><use href="#bulb"/></svg><svg class="fo m4"><use href="#folder"/></svg><span class="t3">6</span></div><div></div><div></div><div></div><div></div><div>00:00:36</div><div></div></div>
            <div class="r pu"><div class="n l2"><i class="st up"></i><svg class="bu"><use href="#bulb"/></svg><svg class="op"><use href="#planar"/></svg><span class="name"><span class="cj">平面轮廓铣</span>...</span></div><div class="c1c"><svg class="tc"><use href="#tb"/></svg></div><div class="c2c"><svg class="ck"><use href="#ok"/></svg></div><div>D8-C</div><div>5</div><div>00:00:24</div><div>Z15.</div></div>
            <div class="r"><div class="n l1"><svg class="ex"><use href="#mn"/></svg><svg class="bu m9"><use href="#bulb"/></svg><svg class="fo m4"><use href="#folder"/></svg><span class="t3">7</span></div><div></div><div></div><div></div><div></div><div>00:01:50</div><div></div></div>
            <div class="r pu"><div class="n l2"><i class="st up"></i><svg class="bu"><use href="#bulb"/></svg><svg class="op"><use href="#planar"/></svg><span class="name">PLANAR_MIL...</span></div><div class="c1c"><svg class="tc"><use href="#tb"/></svg></div><div class="c2c"><svg class="ck"><use href="#ok"/></svg></div><div>D4-C</div><div>9</div><div>00:00:56</div><div>Z15.</div></div>
            <div class="r"><div class="n l2"><i class="st up"></i><svg class="bu"><use href="#bulb"/></svg><svg class="op"><use href="#planar"/></svg><span class="name">PLANAR_MIL...</span></div><div class="c1c"></div><div class="c2c"><svg class="ck"><use href="#ok"/></svg></div><div>D4-C</div><div>9</div><div>00:00:30</div><div>Z15.</div></div>
            <div class="r"><div class="n l2"><i class="st up"></i><svg class="bu"><use href="#bulb"/></svg><svg class="op"><use href="#hole"/></svg><span class="name">HOLE_MILLI...</span></div><div class="c1c"></div><div class="c2c"><svg class="ck"><use href="#ok"/></svg></div><div>D4-C</div><div>9</div><div>00:00:12</div><div>Z15.</div></div>
            <div class="r"><div class="n l1"><svg class="ex"><use href="#mn"/></svg><svg class="bu m9"><use href="#bulb"/></svg><svg class="fo m4"><use href="#folder"/></svg><span class="t3">8</span></div><div></div><div></div><div></div><div></div><div>00:00:58</div><div></div></div>
            <div class="r pu"><div class="n l2"><i class="st up"></i><svg class="bu"><use href="#bulb"/></svg><svg class="op"><use href="#planar"/></svg><span class="name"><span class="cj">平面轮廓</span>_...</span></div><div class="c1c"><svg class="tc"><use href="#tb"/></svg></div><div class="c2c"><svg class="ck"><use href="#ok"/></svg></div><div>X90-J6</div><div>8</div><div>00:00:38</div><div>Z15.</div></div>
            <div class="r"><div class="n l2"><i class="st up"></i><svg class="bu"><use href="#bulb"/></svg><svg class="op"><use href="#planar"/></svg><span class="name"><span class="cj">平面轮廓</span>_...</span></div><div class="c1c"></div><div class="c2c"><svg class="ck"><use href="#ok"/></svg></div><div>X90-J6</div><div>8</div><div>00:00:08</div><div>Z15.</div></div>
            <div class="r"><div class="n l1"><svg class="ex"><use href="#mn"/></svg><svg class="bu m9"><use href="#bulb"/></svg><svg class="fo m4"><use href="#folder"/></svg><span class="t3">9</span></div><div></div><div></div><div></div><div></div><div>00:02:17</div><div></div></div>
            <div class="r pu"><div class="n l2"><i class="st up"></i><svg class="bu"><use href="#bulb"/></svg><svg class="op"><use href="#planar"/></svg><span class="name">PLANAR_MIL...</span></div><div class="c1c"><svg class="tc"><use href="#tb"/></svg></div><div class="c2c"><svg class="ck"><use href="#ok"/></svg></div><div>D4-E</div><div>10</div><div>00:01:18</div><div>Z15.</div></div>
            <div class="r"><div class="n l2"><i class="st up"></i><svg class="bu"><use href="#bulb"/></svg><svg class="op"><use href="#hole"/></svg><span class="name">HOLE_MILLI...</span></div><div class="c1c"></div><div class="c2c"><svg class="ck"><use href="#ok"/></svg></div><div>D4-E</div><div>10</div><div>00:00:46</div><div>Z15.</div></div>
            <div class="r"><div class="n l1"><svg class="ex"><use href="#mn"/></svg><svg class="bu m9"><use href="#bulb"/></svg><svg class="fo m4"><use href="#folder"/></svg><span class="t3">10</span></div><div></div><div></div><div></div><div></div><div>00:00:32</div><div></div></div>
            <div class="r pu"><div class="n l2"><i class="st up"></i><svg class="bu"><use href="#bulb"/></svg><svg class="op"><use href="#planar"/></svg><span class="name">PLANAR_MIL...</span></div><div class="c1c"><svg class="tc"><use href="#tb"/></svg></div><div class="c2c"><svg class="ck"><use href="#ok"/></svg></div><div>D10-E</div><div>4</div><div>00:00:20</div><div>Z15.</div></div>
            <div class="r off"><div class="n lf"><i class="st up s9"></i><svg class="fo"><use href="#no"/></svg><svg class="op op1"><use href="#face"/></svg><span class="name nm0">FLOOR_WALL</span></div><div class="c1c"><svg class="tc"><use href="#tb"/></svg></div><div class="c2c"><svg class="ck"><use href="#bad"/></svg></div><div>D1-C</div><div>3</div><div>00:00:00</div><div>---</div></div>
            <div class="r"><div class="n l0"><svg class="ex"><use href="#mn"/></svg><i class="st s5"></i><svg class="bu m3"><use href="#bulb"/></svg><svg class="fo m4"><use href="#folder"/></svg><span class="t3">FM-10</span></div><div></div><div></div><div></div><div></div><div>00:03:29</div><div></div></div>
            <div class="r"><div class="n l1"><svg class="ex"><use href="#mn"/></svg><svg class="bu m9"><use href="#bulb"/></svg><svg class="fo m4"><use href="#folder"/></svg><span class="t3">21_COPY</span></div><div></div><div></div><div></div><div></div><div>00:02:09</div><div></div></div>
            <div class="r pu"><div class="n l2"><i class="st up"></i><svg class="bu"><use href="#bulb"/></svg><svg class="op"><use href="#face"/></svg><span class="name">FACE_MILLI...</span></div><div class="c1c"><svg class="tc"><use href="#tb"/></svg></div><div class="c2c"><svg class="ck"><use href="#ok"/></svg></div><div>D63-R0.8</div><div>1</div><div>00:01:19</div><div>Z15.</div></div>
            <div class="r"><div class="n l2"><i class="st up"></i><svg class="bu"><use href="#bulb"/></svg><svg class="op"><use href="#face"/></svg><span class="name">FACE_MILLI...</span></div><div class="c1c"></div><div class="c2c"><svg class="ck"><use href="#ok"/></svg></div><div>D63-R0.8</div><div>1</div><div>00:00:30</div><div>Z15.</div></div>
            <i class="guide g-a"></i><i class="guide g-b"></i><i class="guide g-c"></i>
          </div>
          <div class="vscroll"><i class="chev up-c"></i><b class="vthumb"></b><i class="chev dn-c"></i></div>
        </div>
        <div class="hscroll"><i class="chev lf-c"></i><b class="hthumb"></b><i class="chev rt-c"></i></div>
      </div>
      <div class="divider"><b class="grip2"></b></div>
      <div class="acc"><span>相依性</span><i class="accbtn"><i class="chev dn-c"></i></i></div>
      <div class="acc acc2"><span>细节</span><i class="accbtn"><i class="chev dn-c"></i></i></div>
    </aside>

    <aside class="rail">
      <svg class="gear" viewBox="0 0 24 24"><circle cx="12" cy="12" r="6.500" fill="none" stroke="#222" stroke-width="2.500"/><path d="M12 2v4M12 18v4M2 12h4M18 12h4M5 5l3 3M16 16l3 3M19 5l-3 3M8 16l-3 3" stroke="#222" stroke-width="2.200"/></svg>
      <div class="rtabs">
        <div class="rt"><svg class="ic"><use href="#t1"/></svg></div>
        <div class="rt y1"><svg class="ic"><use href="#t2"/></svg></div>
        <div class="rt y2"><svg class="ic"><use href="#t3"/></svg></div>
        <div class="rt act"><svg class="ic"><use href="#t4"/></svg></div>
        <div class="rt y1"><svg class="ic"><use href="#t5"/></svg></div>
        <div class="rt y1"><svg class="ic"><use href="#t6"/></svg></div>
        <div class="rt y2"><svg class="ic"><use href="#t7"/></svg></div>
        <div class="rt y14"><svg class="ic"><use href="#t8"/></svg></div>
        <div class="rt y15"><svg class="ic"><use href="#t9"/></svg></div>
        <div class="rt y13"><svg class="ic"><use href="#t10"/></svg></div>
        <div class="rt y2"><svg class="ic"><use href="#t11"/></svg></div>
        <div class="rt y2"><svg class="ic"><use href="#t12"/></svg></div>
        <div class="rt y2"><svg class="ic"><use href="#t13"/></svg></div>
        <div class="rt y2"><svg class="ic"><use href="#t14"/></svg></div>
      </div>
    </aside>
  </main>

  <section class="bottombar">
    <div class="tbrow tb3">
      <i class="grip"></i>
      <svg class="ic m5 picked"><use href="#b1"/></svg><svg class="ic m5"><use href="#b2"/></svg><svg class="ic m8"><use href="#b3"/></svg><svg class="ic m9"><use href="#b4"/></svg><i class="ar m5"></i><i class="sep m5"></i>
      <svg class="ic m10"><use href="#b5"/></svg><i class="ar m8"></i><svg class="ic m7"><use href="#b6"/></svg><i class="ar m8"></i><svg class="ic m6"><use href="#b7"/></svg><i class="ar m7"></i><svg class="ic m7"><use href="#b8"/></svg><svg class="ic m7"><use href="#b9"/></svg><svg class="ic m7"><use href="#b10"/></svg><i class="ar m8"></i><i class="ar lo m6"></i>
    </div>
  </section>
  <footer class="status"><span class="stext">没有对象被复制到剪贴板</span></footer>
  <div class="taskbar"><i class="tk-w"></i><i class="tk-b"></i><i class="tk-g"></i><span class="clock">21:36</span></div>

  <div class="temp">
    <svg viewBox="0 0 80 80" class="ring"><circle cx="40" cy="40" r="36" fill="#f4faf5"/><circle cx="40" cy="40" r="37" fill="none" stroke="#f2f2f2" stroke-width="4"/><circle cx="40" cy="40" r="37" fill="none" stroke="#3cd870" stroke-width="4.500" stroke-dasharray="165 233" transform="rotate(-90 40 40)"/></svg>
    <div class="tv"><span class="t71">71</span><span class="tp">%</span></div>
    <div class="td"><svg class="therm" viewBox="0 0 10 14"><path d="M3 2a2 2 0 0 1 4 0v6a3.500 3.500 0 1 1-4 0z" fill="#3cc866"/></svg><span>35°C</span></div>
  </div>

  <div class="ime">
    <span class="ime-s">S</span>
    <div class="ime-bar">
      <span class="ime-a">A</span>
      <svg class="ii" viewBox="0 0 24 24"><path d="M14 2c5 8 1 18-9 18 8 5 17-2 15-10-1-4-3-7-6-8z" fill="#1677d8"/></svg>
      <svg class="ii" viewBox="0 0 24 24"><circle cx="7" cy="7" r="2.200" fill="#1677d8"/><path d="M15 14c3 0 3 5-1 8 0-2 1-3 0-4-2-1-1-4 1-4z" fill="#1677d8"/></svg>
      <svg class="ii" viewBox="0 0 24 24"><rect x="8" y="1" width="8" height="14" rx="4" fill="#1677d8"/><path d="M5 11c0 9 14 9 14 0M12 18v5M8 23h8" fill="none" stroke="#1677d8" stroke-width="2"/></svg>
      <svg class="ii" viewBox="0 0 24 24"><rect x="3" y="4" width="18" height="16" rx="2" fill="#1677d8"/><path d="M5 8h14M5 12h14M5 16h14M9 6v12M15 6v12" stroke="#fff" stroke-width="1.500"/></svg>
      <svg class="ii" viewBox="0 0 24 24"><circle cx="11" cy="6" r="4.500" fill="#ccc"/><path d="M3 22c0-10 5-11 8-11s8 1 8 11z" fill="#ccc"/><path d="M15 16h7v7h-7z" fill="#fff" stroke="#ccc"/></svg>
      <svg class="ii" viewBox="0 0 24 24"><path d="M8 2h8l7 5-3 4-3-1v13H7V10l-3 1-3-4z" fill="#1677d8"/></svg>
      <svg class="ii" viewBox="0 0 24 24"><path d="M2 6a4 4 0 0 1 8-1v6H5a4 4 0 0 1-3-5zM14 5a4 4 0 0 1 8 1 4 4 0 0 1-3 5h-5zM2 18a4 4 0 0 1 3-5h5v6a4 4 0 0 1-8-1zM14 13h5a4 4 0 0 1 3 5 4 4 0 0 1-8 1z" fill="#1677d8"/></svg>
    </div>
  </div>
</div>
</body>
</html>
```
FILE: styles.css
```css
* { box-sizing: border-box; }
html, body { margin: 0; padding: 0; }
body { background: #222; font-family: "Liberation Mono", "Noto Sans CJK SC", monospace; font-size: 13px; color: #111; }
i, b { font-style: normal; display: block; flex: none; }
svg { display: block; flex: none; }
.defs { position: absolute; width: 0; height: 0; }
.app { position: relative; width: 1920px; height: 1039px; overflow: hidden; display: flex; flex-direction: column; }

.m1 { margin-left: 1px; } .m2 { margin-left: 2px; } .m3 { margin-left: 3px; } .m4 { margin-left: 4px; } .m5 { margin-left: 5px; }
.m6 { margin-left: 6px; } .m7 { margin-left: 7px; } .m8 { margin-left: 8px; } .m9 { margin-left: 9px; } .m10 { margin-left: 10px; } .m11 { margin-left: 11px; }

/* title */
.titlebar { height: 29px; border-top: 3px solid #555658; background: #1b1b1b; display: flex; align-items: center; color: #fff; padding-left: 3px; }
.tlogo { width: 20px; height: 22px; }
.ttext { margin-left: 4px; font: 15.5px "Liberation Sans", "Noto Sans CJK SC", sans-serif; white-space: pre; color: #eee; }
.siemens { margin-left: auto; margin-right: 25px; font: 700 15.5px "Liberation Sans", sans-serif; letter-spacing: -.1px; }
.wbtn { width: 25px; height: 22px; margin-right: 4px; border: 1px solid #666; border-radius: 3px; background: linear-gradient(#6a6a6a, #333); display: flex; align-items: center; justify-content: center; font: 700 14px "DejaVu Sans", sans-serif; position: relative; }
.wbtn:last-child, .wclose { margin-right: 3px; background: linear-gradient(#f06a40, #c92a10); border-color: #b54; }
.wmin { width: 8px; height: 3px; background: #fff; margin-top: 9px; }
.wres { width: 9px; height: 8px; border: 1px solid #fff; box-shadow: 2px -2px 0 -1px #1b1b1b, 2px -2px 0 0 #ddd; }

/* menu */
.menubar { height: 25px; background: linear-gradient(#e9e9e9, #dfdfdf); border-bottom: 1px solid #b5b5b5; display: flex; align-items: center; padding-left: 8px; white-space: nowrap; color: #222; }
.mlogo { width: 20px; height: 22px; margin-right: 3px; }
.mi { margin-right: 17.6px; line-height: 1; }
.m-pref { margin-left: 18px; } .m-a { margin-left: 0; letter-spacing: .75px; } .m-b { margin-left: -3px; } .m-c { margin-left: -2px; letter-spacing: .3px; } .m-d { letter-spacing: .42px; margin-left: 2px; } .m-e { margin-left: -1px; }
.mdi { width: 17px; height: 17px; margin-left: 2px; border: 1px solid #888; border-radius: 3px; background: #eee; display: flex; align-items: center; justify-content: center; font: 700 11px "DejaVu Sans", sans-serif; color: #444; flex: none; }
.m-e + .mdi { margin-left: auto; }
.mdi:last-child { margin-right: 5px; }
.dmin { width: 7px; height: 2px; background: #444; margin-top: 8px; }
.dres { width: 9px; height: 8px; border: 1px solid #444; border-top-width: 2px; }

/* toolbars */
.toolbars { height: 70px; background: linear-gradient(#dcdcdc, #cbcbcb); border-bottom: 1px solid #8f8f8f; display: flex; flex-direction: column; }
.tbrow { display: flex; align-items: center; flex: none; }
.tb1 { width: 1262px; height: 34px; background: linear-gradient(#e6e6e6, #d8d8d8); border-right: 1px solid #c0c0c0; border-bottom: 1px solid #bbb; }
.tb1 > .grip { margin-left: 2px; }
.tb2 { width: 145px; height: 35px; background: linear-gradient(#e2e2e2, #d4d4d4); border-right: 1px solid #c0c0c0; }
.grip { width: 3px; height: 24px; margin-left: 4px; background: repeating-linear-gradient(#fff 0 2px, #bbb 2px 4px); }
.ic { width: 24px; height: 24px; }
.is { width: 18px; height: 18px; }
.qd { font-family: "Noto Sans CJK SC", sans-serif; font-size: 14px; width: 28px; }
.ar { height: 0; border-left: 3px solid transparent; border-right: 3px solid transparent; border-top: 4px solid #222; width: 6px; margin-right: -1px; }
.ar.lo { margin-top: 12px; }
.sep { width: 1px; height: 30px; background: #fafafa; box-shadow: 1px 0 0 #bdbdbd; }
.search { width: 137px; height: 22px; background: #fff; border: 1px solid #bcbcbc; border-radius: 2px; display: flex; align-items: center; justify-content: space-between; padding: 0 3px; color: #aaa; font-family: "Noto Sans CJK SC", sans-serif; font-size: 14px; flex: none; }
.mag { width: 18px; height: 18px; }

/* selection bar */
.selbar { height: 30px; background: linear-gradient(#c9c9c9, #dcdcdc); border-bottom: 2px solid #333; display: flex; align-items: center; padding-left: 6px; }
.selbar .sep { height: 24px; }
.combo { height: 19px; background: #fff; border: 1px solid #777; border-radius: 2px; display: flex; justify-content: space-between; font-family: "Noto Sans CJK SC", sans-serif; font-size: 14.5px; line-height: 15px; padding-left: 1px; flex: none; }
.c1 { width: 146px; } .c2 { width: 154px; margin-left: 10px; }
.drop { width: 20px; background: linear-gradient(#8fc0ea, #3f83c8); border-radius: 2px; position: relative; }
.drop::after { content: ""; position: absolute; left: 5px; top: 6px; border-left: 5px solid transparent; border-right: 5px solid transparent; border-top: 6px solid #123; }
.end { margin-left: auto; margin-right: 6px; margin-top: 8px; }

/* main */
.main { height: 820px; display: flex; background: #232529; }
.viewport { width: 1100px; height: 820px; }
.ax { font: 10px "Liberation Sans", sans-serif; }
.ax2 { font: 12px "Liberation Sans", sans-serif; }
.ag { fill: #3ba06a; } .ab { fill: #1e6ef0; } .ar-t { fill: #c4506a; }
.panel { width: 789px; height: 819px; background: #ebebeb; border-bottom: 1px solid #999; padding-left: 10px; display: flex; flex-direction: column; }
.ptitle { height: 37px; display: flex; align-items: center; padding-left: 5px; flex: none; }
.ptitle span { margin-left: 13px; font: 700 15px "Liberation Mono", "Noto Sans CJK SC", monospace; letter-spacing: .55px; white-space: pre; }
.pbox { width: 15px; height: 15px; border: 1px solid #111; border-top-width: 3px; margin-top: -1px; }
.table { width: 771px; height: 712px; border: 1px solid #777; background: #fff; flex: none; display: flex; flex-direction: column; }
.thead { height: 20px; display: grid; grid-template-columns: 201px 100px 100px 100px 100px 100px 68px; background: linear-gradient(#f2f2f2, #dcdcdc); border-bottom: 1px solid #8c8c8c; font: 14px/18px "Noto Sans CJK SC", sans-serif; flex: none; color: #222; }
.thead span { padding-left: 6px; border-right: 1px solid #aaa; }
.thead span:first-child { padding-left: 8px; }
.thead span:last-child { border-right: 0; }
.tbody { height: 669px; display: flex; flex: none; overflow: hidden; }
.rows { width: 748px; height: 669px; overflow: hidden; position: relative; flex: none; }
.r { height: 20px; display: grid; grid-template-columns: 201px 100px 100px 100px 100px 100px 47px; box-shadow: inset 0 -1px 0 #e6e6e6; line-height: 21px; white-space: nowrap; }
.r:nth-child(even) { background: #f7f7f7; }
.r > div { border-right: 1px solid #e6e6e6; padding-left: 4px; overflow: hidden; }
.r > .n { border-right: 1px solid #000; padding-left: 0; display: flex; align-items: center; overflow: visible; }
.r > .c1c { padding-left: 9px; display: flex; align-items: center; }
.r > .c2c { padding-left: 6px; display: flex; align-items: center; }
.n > span { padding-top: 1px; }
.l-root { padding-left: 3px !important; }
.l0 { padding-left: 5px !important; }
.l1 { padding-left: 24px !important; }
.l2 { padding-left: 48px !important; }
.lf { padding-left: 30px !important; }
.l0 > .s15 { margin-left: 5px; width: 11px; }
.st { height: 0; width: 5px; margin-left: 1px; border-top: 1px dotted #888; position: relative; }
.st.up { width: 11px; margin-right: 3px; margin-left: 0; }
.st.up.s9 { width: 10px; margin-right: 0; }
.st.up::before { content: ""; position: absolute; left: 0; top: -11px; height: 11px; border-left: 1px dotted #888; }
.fo { width: 15px; height: 15px; }
.ex { width: 10px; height: 10px; position: relative; z-index: 1; }
.bu { width: 9px; height: 16px; }
.op { width: 16px; height: 16px; margin-left: 3px; }
.op.op1 { margin-left: 1px; }
.t3 { margin-left: 3px; } .t4 { margin-left: 4px; }
.name { margin-left: 2px; padding-left: 1px; height: 19px; line-height: 19px; flex: none; }
.name.nm0 { margin-left: 0; }
.cj { font-family: "Noto Sans CJK SC", sans-serif; font-size: 14.5px; }
.n > .cj { margin-top: -2px; padding-top: 0; }
.name > .cj { display: inline-block; line-height: 17px; vertical-align: top; }
.tc { width: 8px; height: 14px; }
.ck { width: 12px; height: 12px; }
.sel > div:not(.n) { background: #0a72d0; color: #fff; border-right-color: #fff; }
.sel .name { background: #0a72d0; color: #fff; width: 110px; padding-left: 2px; }
.pu { color: #5a3ea6; }
.off { color: #7f9f90; }
.guide { position: absolute; width: 0; border-left: 1px dotted #888; }
.g-a { left: 10px; top: 20px; height: 590px; }
.g-b { left: 30px; top: 100px; height: 490px; }
.g-c { left: 30px; top: 640px; height: 29px; }
.vscroll { width: 21px; background: #f0f0f0; position: relative; flex: none; }
.vthumb { position: absolute; left: 1px; right: 1px; top: 20px; height: 531px; background: #c8c8c8; }
.chev { width: 8px; height: 8px; border-top: 2px solid #444; border-left: 2px solid #444; position: absolute; }
.up-c { transform: rotate(45deg); left: 6px; top: 8px; }
.vscroll .dn-c { left: 6px; bottom: 9px; transform: rotate(225deg); }
.hscroll { height: 21px; background: #f2f2f2; position: relative; flex: none; }
.hthumb { position: absolute; left: 22px; width: 585px; top: 0; height: 20px; background: #c8c8c8; }
.lf-c { transform: rotate(-45deg); left: 8px; top: 6px; }
.rt-c { transform: rotate(135deg); right: 29px; top: 6px; }
.divider { height: 13px; width: 771px; position: relative; flex: none; }
.divider::before { content: ""; position: absolute; left: 0; right: 0; top: 6px; border-top: 1px solid #bbb; }
.grip2 { position: absolute; left: 313px; top: 3px; width: 147px; height: 7px; background: linear-gradient(#f4f4f4, #ccc); border: 1px solid #aaa; }
.acc { height: 25px; width: 771px; background: linear-gradient(#fff 0, #f6f6f6 50%, #dcdcdc 52%, #cfcfcf 100%); border-bottom: 1px solid #999; display: flex; align-items: center; justify-content: space-between; padding-left: 8px; font: 700 14.5px "Noto Sans CJK SC", sans-serif; flex: none; position: relative; }
.acc > span { margin-top: -3px; }
.acc2 { margin-top: 2px; height: 24px; }
.accbtn { width: 25px; height: 100%; border-left: 1px solid #aaa; position: relative; }
.accbtn .dn-c { left: 8px; top: 7px; transform: rotate(225deg); }

/* rail */
.rail { width: 31px; background: #a0a0a0; position: relative; flex: none; }
.gear { width: 18px; height: 18px; margin: 5px 0 0 6px; }
.rtabs { margin-top: 23px; display: flex; flex-direction: column; align-items: flex-start; }
.rt { width: 26px; height: 40px; margin-left: 1px; background: linear-gradient(90deg, #f0f0f0, #dadada); border: 1px solid #777; border-left: 0; border-radius: 0 4px 4px 0; display: flex; align-items: center; justify-content: center; }
.rt .ic { width: 22px; height: 22px; }
.y1 { margin-top: 1px; } .y2 { margin-top: 2px; } .y13 { margin-top: 13px; } .y14 { margin-top: 14px; } .y15 { margin-top: 15px; }
.act { width: 28px; height: 44px; margin-left: 0; background: #f6f6f6; border-color: #888; }

/* bottom */
.bottombar { height: 33px; background: linear-gradient(#dedede, #c4c4c4); flex: none; border-top: 1px solid #bbb; }
.tb3 { width: 401px; height: 32px; background: linear-gradient(#e6e6e6, #d2d2d2); border-right: 1px solid #bbb; }
.picked { background: #fff; box-shadow: 0 0 0 2px #fff, 0 0 0 3px #777; border-radius: 2px; }
.status { height: 22px; background: linear-gradient(#e2e2e2, #cfcfcf); border-top: 1px solid #eee; border-bottom: 1px solid #888; padding-left: 914px; flex: none; }
.stext { display: block; height: 20px; padding-left: 3px; border-left: 1px solid #bbb; font: 15.8px/20px "Noto Sans CJK SC", sans-serif; color: #111; white-space: nowrap; }
.taskbar { height: 10px; background: #1f3543; display: flex; position: relative; overflow: hidden; flex: none; }
.tk-w { width: 206px; margin-left: 119px; background: #efefef; }
.tk-b { width: 70px; background: #1e88f0; }
.tk-g { width: 200px; margin-left: 270px; background: #4a626c; }
.clock { position: absolute; left: 1788px; top: 7px; color: #fff; font: 13px "Liberation Sans", sans-serif; }

/* overlays */
.temp { position: absolute; left: 1800px; top: 484px; width: 80px; height: 81px; filter: drop-shadow(0 1px 4px rgba(0,0,0,.25)); }
.ring { width: 80px; height: 81px; }
.tv { position: absolute; left: 17px; top: 8px; color: #666; font-family: "Liberation Sans", sans-serif; white-space: nowrap; }
.t71 { font-size: 31px; }
.tp { font-size: 15px; margin-left: 1px; }
.td { position: absolute; left: 18px; top: 48px; display: flex; align-items: center; gap: 5px; font: 10.5px "Liberation Sans", sans-serif; color: #444; }
.therm { width: 9px; height: 13px; }
.ime { position: absolute; left: 1639px; top: 987px; width: 281px; height: 38px; }
.ime-s { position: absolute; left: 0; top: 0; width: 38px; height: 36px; border-radius: 8px; background: #ee5a24; color: #fff; font: italic 700 32px/36px "Liberation Sans", sans-serif; text-align: center; transform: rotate(-10deg); z-index: 1; }
.ime-bar { position: absolute; left: 26px; top: 6px; right: 0; height: 30px; background: #fdfdfd; display: flex; align-items: center; padding-left: 21px; }
.ime-a { width: 22px; color: #1677d8; font: 23px "Liberation Sans", sans-serif; text-align: center; margin-right: 9.500px; }
.ii { width: 20px; height: 20px; margin-right: 10px; }
```
